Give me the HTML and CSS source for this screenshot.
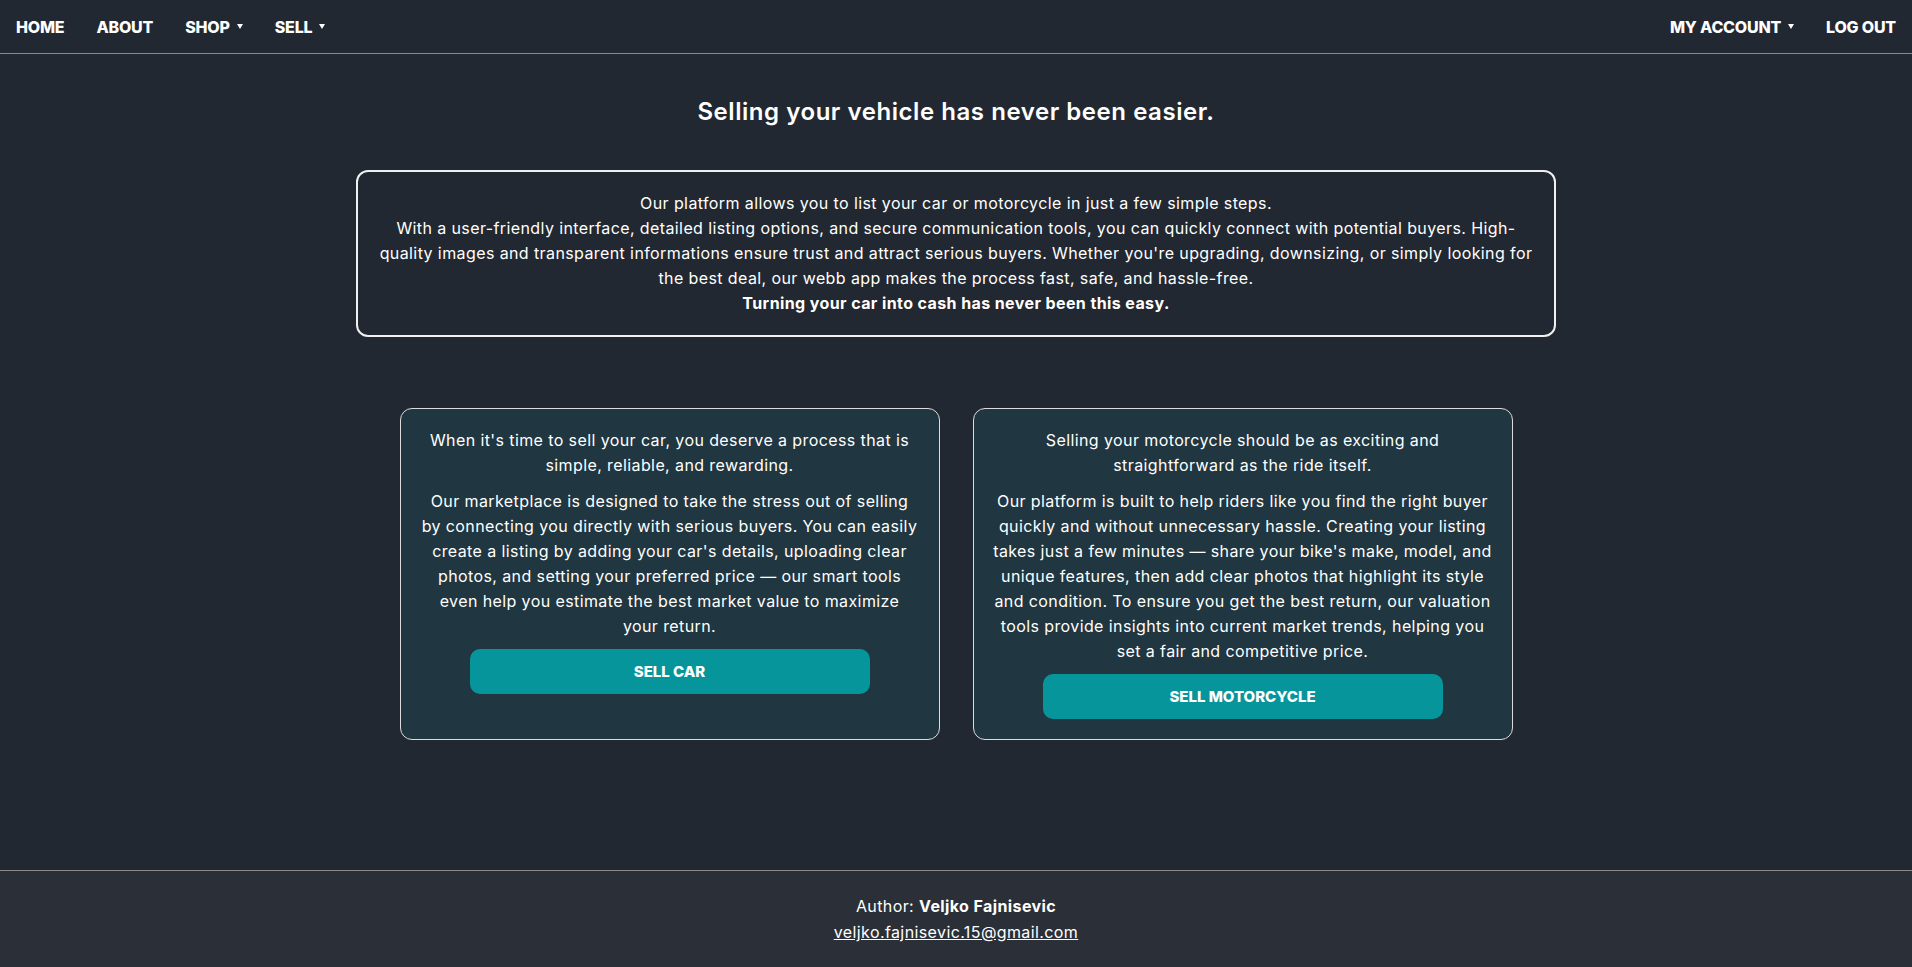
FILE: index.html
```html
<!DOCTYPE html>
<html lang="en">
<head>
<meta charset="utf-8">
<title>Sell</title>
<link rel="stylesheet" href="styles.css">
</head>
<body>
<nav class="nav">
  <div class="nav-group">
    <a class="nav-link" href="#">Home</a>
    <a class="nav-link" href="#">About</a>
    <a class="nav-link" href="#">Shop <span class="caret"></span></a>
    <a class="nav-link" href="#">Sell <span class="caret"></span></a>
  </div>
  <div class="nav-group">
    <a class="nav-link" href="#">My Account <span class="caret"></span></a>
    <a class="nav-link" href="#">Log Out</a>
  </div>
</nav>
<main class="main">
  <h1 class="title">Selling your vehicle has never been easier.</h1>
  <section class="intro">
    <p>Our platform allows you to list your car or motorcycle in just a few simple steps.<br>
    With a user-friendly interface, detailed listing options, and secure communication tools, you can quickly connect with potential buyers. High-quality images and transparent informations ensure trust and attract serious buyers. Whether you're upgrading, downsizing, or simply looking for the best deal, our webb app makes the process fast, safe, and hassle-free.<br>
    <strong>Turning your car into cash has never been this easy.</strong></p>
  </section>
  <section class="cards">
    <div class="card">
      <p>When it's time to sell your car, you deserve a process that is simple, reliable, and rewarding.</p>
      <p>Our marketplace is designed to take the stress out of selling by connecting you directly with serious buyers. You can easily create a listing by adding your car's details, uploading clear photos, and setting your preferred price — our smart tools even help you estimate the best market value to maximize your return.</p>
      <a class="btn" href="#">Sell Car</a>
    </div>
    <div class="card">
      <p>Selling your motorcycle should be as exciting and straightforward as the ride itself.</p>
      <p>Our platform is built to help riders like you find the right buyer quickly and without unnecessary hassle. Creating your listing takes just a few minutes — share your bike's make, model, and unique features, then add clear photos that highlight its style and condition. To ensure you get the best return, our valuation tools provide insights into current market trends, helping you set a fair and competitive price.</p>
      <a class="btn" href="#">Sell Motorcycle</a>
    </div>
  </section>
</main>
<footer class="footer">
  <div>Author: <strong>Veljko Fajnisevic</strong></div>
  <a class="mail" href="#">veljko.fajnisevic.15@gmail.com</a>
</footer>
</body>
</html>
```
FILE: styles.css
```css
* { box-sizing: border-box; }
html, body { margin: 0; padding: 0; }
body {
  background: #222831;
  color: #ffffff;
  font-family: Inter, "Open Sans", sans-serif;
  font-size: 16px;
  letter-spacing: 0.4px;
  min-height: 100vh;
  display: flex;
  flex-direction: column;
}
.nav {
  height: 54px;
  display: flex;
  justify-content: space-between;
  align-items: center;
  border-bottom: 1px solid #8a8a8a;
}
.nav-group { display: flex; align-items: center; }
.nav-link {
  color: #fff;
  text-decoration: none;
  text-transform: uppercase;
  font-weight: 800;
  font-size: 16px;
  letter-spacing: -0.2px;
  padding: 0 16px;
  display: flex;
  align-items: center;
}
.caret {
  display: inline-block;
  width: 0; height: 0;
  border-left: 3.5px solid transparent;
  border-right: 3.5px solid transparent;
  border-top: 5px solid #fff;
  margin-left: 7px;
}
.main {
  flex: 1;
  display: flex;
  flex-direction: column;
  align-items: center;
  padding-top: 40px;
}
.title {
  margin: 0;
  font-size: 24px;
  font-weight: 600;
  line-height: 36px;
  letter-spacing: 0.55px;
}
.intro {
  width: 1200px;
  margin-top: 40px;
  border: 2px solid #f0f0f0;
  border-radius: 12px;
  padding: 19px 20px;
  text-align: center;
}
.intro p { margin: 0; line-height: 25px; }
.intro strong { font-weight: 700; letter-spacing: 0.4px; }
.cards {
  display: flex;
  gap: 33px;
  margin-top: 71px;
}
.card {
  width: 540px;
  background: #203640;
  border: 1px solid #dcdcdc;
  border-radius: 12px;
  padding: 19px 19.3px 20px;
  text-align: center;
  display: flex;
  flex-direction: column;
  align-items: center;
}
.card p { margin: 0 0 10.5px; line-height: 25px; }
.btn {
  width: 400px;
  height: 45px;
  background: #07959c;
  border-radius: 10px;
  color: #fff;
  text-decoration: none;
  text-transform: uppercase;
  font-weight: 800;
  font-size: 15px;
  letter-spacing: 0;
  display: flex;
  align-items: center;
  justify-content: center;
}
.footer {
  background: #2b3038;
  border-top: 1px solid #8a8a8a;
  padding: 22px 0;
  text-align: center;
  line-height: 26px;
  font-size: 16px;
}
.footer strong { font-weight: 700; }
.mail { color: #fff; }
```
